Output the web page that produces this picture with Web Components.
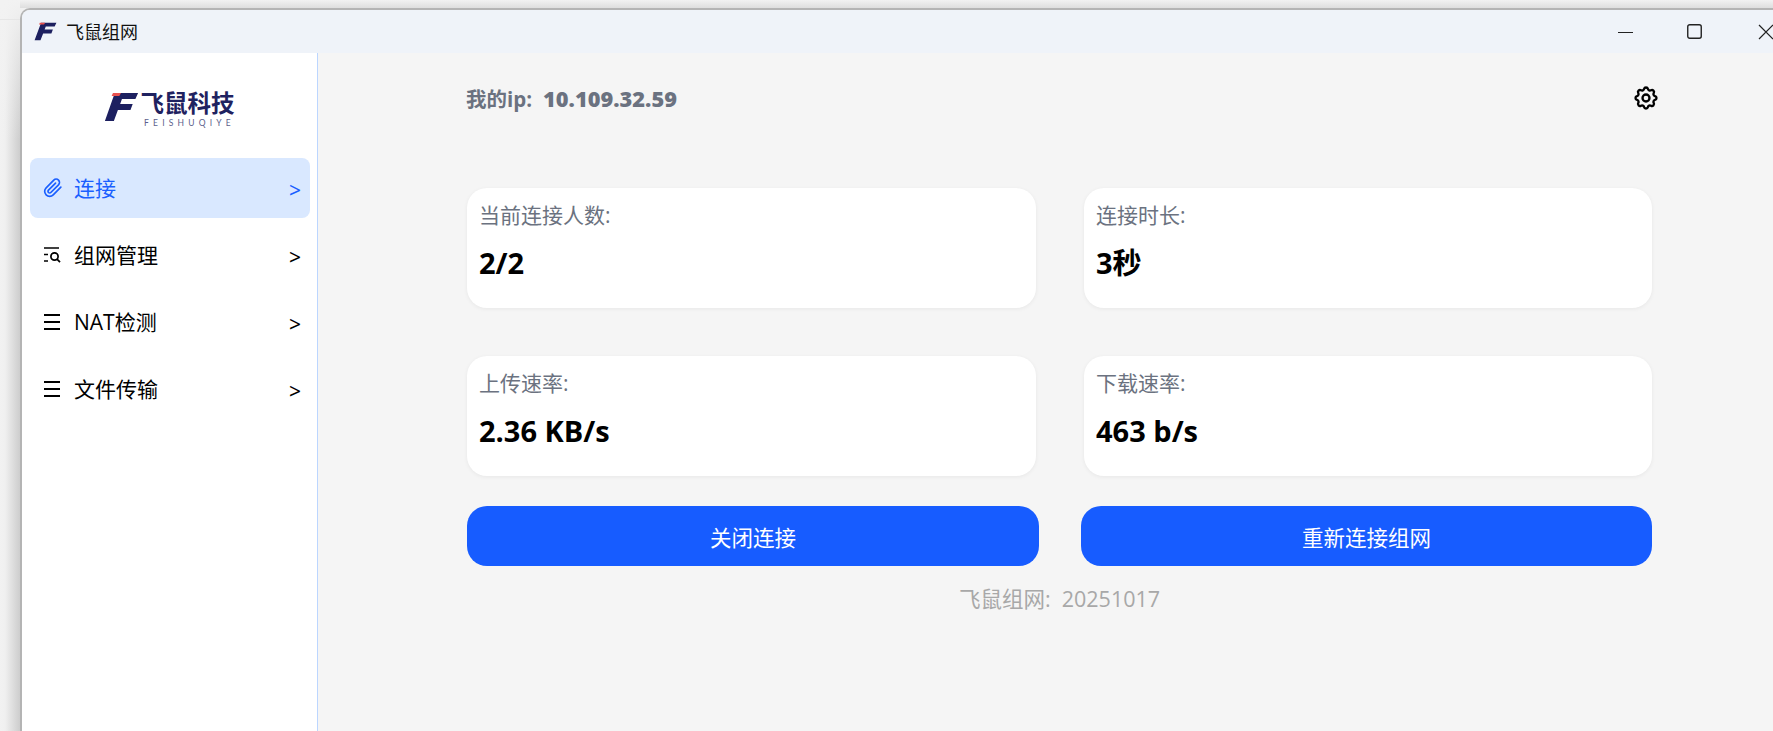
<!DOCTYPE html>
<html lang="zh-CN"><head><meta charset="utf-8"><title>飞鼠组网</title>
<style>
html,body{margin:0;padding:0;height:731px;overflow:hidden;background:#f0f0f0}
body{font-family:"Open Sans","Noto Sans CJK SC",sans-serif}
</style></head><body>
<fs-desktop>
 <fs-window>
  <fs-titlebar slot="top">飞鼠组网</fs-titlebar>
  <fs-sidebar slot="side">
   <fs-logo></fs-logo>
   <fs-menu-item active label="连接"><svg slot="icon" width="20" height="20" viewBox="0 0 24 24" fill="none" stroke="currentColor" stroke-width="2" stroke-linecap="round" stroke-linejoin="round"><path d="M21.44 11.05l-9.19 9.19a6 6 0 0 1-8.49-8.49l9.19-9.19a4 4 0 0 1 5.66 5.66l-9.2 9.19a2 2 0 0 1-2.83-2.83l8.49-8.48"/></svg></fs-menu-item>
   <fs-menu-item label="组网管理"><svg slot="icon" width="18" height="18" viewBox="0 0 18 18" fill="none" stroke="currentColor" stroke-width="1.5"><path d="M1 2h15M1 8.500h4M1 15h4"/><circle cx="11.500" cy="10.500" r="3.600" stroke-width="1.700"/><path d="M14 13.200l3 3" stroke-width="1.800"/></svg></fs-menu-item>
   <fs-menu-item label="NAT检测"><svg slot="icon" width="18" height="18" viewBox="0 0 18 18" fill="none" stroke="currentColor" stroke-width="1.800"><path d="M1 2h16M1 9h16M1 16h16"/></svg></fs-menu-item>
   <fs-menu-item label="文件传输"><svg slot="icon" width="18" height="18" viewBox="0 0 18 18" fill="none" stroke="currentColor" stroke-width="1.800"><path d="M1 2h16M1 9h16M1 16h16"/></svg></fs-menu-item>
  </fs-sidebar>
  <fs-main slot="main" ip="10.109.32.59" version="20251017">
   <fs-stat label="当前连接人数:" value="2/2"></fs-stat>
   <fs-stat label="连接时长:" value="3秒"></fs-stat>
   <fs-stat label="上传速率:" value="2.36 KB/s"></fs-stat>
   <fs-stat label="下载速率:" value="463 b/s"></fs-stat>
   <fs-button slot="actions" style="width:572px">关闭连接</fs-button>
   <fs-button slot="actions" style="width:571px">重新连接组网</fs-button>
  </fs-main>
 </fs-window>
</fs-desktop>
<script>
function def(name, html, init){
  customElements.define(name, class extends HTMLElement{
    constructor(){super();this.attachShadow({mode:'open'}).innerHTML=html;}
    connectedCallback(){ if(init) init.call(this,this.shadowRoot); }
  });
}
def('fs-desktop',`<style>
:host{display:block;width:1773px;height:731px;overflow:hidden;box-sizing:border-box;padding:8px 0 0 20px;
background:
 linear-gradient(180deg,#f2f2f2 0,#dedede 8px) 20px 0/100% 8px no-repeat,
 linear-gradient(#e6e6e6,#e6e6e6) 0 19px/20px 1px no-repeat,
 linear-gradient(180deg,#f2f2f2 0,rgba(242,242,242,0) 140px) 0 0/20px 140px no-repeat,
 linear-gradient(90deg,#f2f2f2 0,#f0f0f0 5px,#cdcdcd 20px) 0 0/20px 100% no-repeat,
 #f0f0f0}
</style><slot></slot>`);
def('fs-window',`<style>
:host{display:flex;flex-direction:column;width:1790px;height:760px;box-sizing:border-box;border:solid #b4b4b4;border-width:2px 0 0 2px;border-top-left-radius:10px;overflow:hidden;background:#f5f5f5}
.body{flex:1;display:flex;min-height:0}
</style><slot name="top"></slot><div class="body"><slot name="side"></slot><slot name="main"></slot></div>`);
def('fs-titlebar',`<style>
:host{display:flex;align-items:center;height:43px;background:#eff3f9;color:#111;font-size:18px;padding-left:12px;flex:none}
svg.l{margin-right:9px}
.t{flex:1;position:relative;top:-1px}
.c{display:flex;align-items:center;width:208px;padding-left:16px;box-sizing:border-box;height:100%}
.c svg{flex:none;display:block}
.c svg:nth-child(2){margin:0 56px 0 53px}
</style>
<svg class="l" width="23" height="19" viewBox="-5 -1 39 30" preserveAspectRatio="none"><path d="M7 0H33L30 6H15L13 11H27L24.500 17H10.500L6 28H-4Z" fill="#1d2060"/><path d="M5 0H14L12 3H3.500Z" fill="#e8524f"/></svg>
<span class="t"><slot></slot></span>
<span class="c">
<svg width="16" height="16" viewBox="0 0 16 16"><path d="M0 8.500H15" stroke="#222" stroke-width="1"/></svg>
<svg width="15" height="15" viewBox="0 0 15 15" fill="none"><rect x=".75" y=".75" width="13.500" height="13.500" rx="2" stroke="#222" stroke-width="1.400"/></svg>
<svg width="16" height="16" viewBox="0 0 16 16" fill="none"><path d="M1 1L15 15M15 1L1 15" stroke="#222" stroke-width="1.200"/></svg>
</span>`);
def('fs-logo',`<style>
:host{display:flex;justify-content:center;height:105px;box-sizing:border-box;padding:39px 2px 0 0;color:#1f2260}
svg{margin:0 2px 0 0;flex:none}
.w{display:flex;flex-direction:column;align-items:center;font-family:"Liberation Sans","Noto Sans CJK SC",sans-serif}
.a{font-size:23.500px;font-weight:700;line-height:24px;white-space:nowrap}
.b{font-family:"Lato",sans-serif;font-size:8.500px;line-height:10px;letter-spacing:4.200px;margin-right:-4px;color:#5c5f8c;margin-top:2px;white-space:nowrap}
</style>
<svg width="35" height="30" viewBox="-5 -1 39 30" preserveAspectRatio="none"><path d="M7 0H33L30 6H15L13 11H27L24.500 17H10.500L6 28H-4Z" fill="#1d2060"/><path d="M5 0H14L12 3H3.500Z" fill="#e8524f"/></svg>
<div class="w"><div class="a">飞鼠科技</div><div class="b">FEISHUQIYE</div></div>`);
def('fs-sidebar',`<style>
:host{display:flex;flex-direction:column;gap:7px;width:295px;flex:none;box-sizing:border-box;background:#fff;padding:0 7px 0 8px}
::slotted(fs-logo){margin-bottom:-7px}
</style><slot></slot>`);
def('fs-menu-item',`<style>
:host{display:flex;align-items:center;height:60px;border-radius:8px;padding:0 9px 0 14px;color:#000;font-size:21px}
:host([active]){background:#d9e8ff;color:#1a5fff}
.i{width:22px;display:flex;align-items:center;flex:none;margin-right:9px;margin-left:-1px}
.l{flex:1;white-space:nowrap;margin-bottom:2px}
.g{font-family:"Noto Sans",sans-serif;font-size:21px;line-height:24px;position:relative;top:2px}
</style><span class="i"><slot name="icon"></slot></span><span class="l"></span><span class="g">&gt;</span>`,
function(r){r.querySelector('.l').textContent=this.getAttribute('label');});
def('fs-main',`<style>
:host{flex:1;display:block;min-width:0;box-sizing:border-box;background:#f5f5f5;border-left:1px solid #bcd6ff;padding:0 0 0 149px;width:1473px}
.w{width:1185px}
.top{display:flex;align-items:center;justify-content:space-between;height:87px;font-weight:700;font-size:20.500px;color:#6b7280;margin:1px -8px 0 -1px}
.top b{font-size:21.800px;margin-left:11px}
.top svg{color:#000;display:block}
.grid{display:grid;grid-template-columns:569px 568px;column-gap:48px;row-gap:48px;margin-top:47px}
.act{display:flex;justify-content:space-between;margin-top:30px}
.ver{text-align:center;color:#a8a8a8;font-size:21.500px;margin-top:19px;line-height:28px}
</style><div class="w">
<div class="top"><span><span class="ip"></span><b class="n"></b></span><svg width="28" height="28" viewBox="0 0 24 24" fill="none" stroke="currentColor" stroke-width="2" stroke-linecap="round" stroke-linejoin="round"><path d="M10.325 4.317c.426 -1.756 2.924 -1.756 3.350 0a1.724 1.724 0 0 0 2.573 1.066c1.543 -.94 3.310 .826 2.370 2.370a1.724 1.724 0 0 0 1.065 2.572c1.756 .426 1.756 2.924 0 3.350a1.724 1.724 0 0 0 -1.066 2.573c.94 1.543 -.826 3.310 -2.370 2.370a1.724 1.724 0 0 0 -2.572 1.065c-.426 1.756 -2.924 1.756 -3.350 0a1.724 1.724 0 0 0 -2.573 -1.066c-1.543 .94 -3.310 -.826 -2.370 -2.370a1.724 1.724 0 0 0 -1.065 -2.572c-1.756 -.426 -1.756 -2.924 0 -3.350a1.724 1.724 0 0 0 1.066 -2.573c-.94 -1.543 .826 -3.310 2.370 -2.370c1 .608 2.296 .07 2.572 -1.065z"/><circle cx="12" cy="12" r="3"/></svg></div>
<div class="grid"><slot></slot></div>
<div class="act"><slot name="actions"></slot></div>
<div class="ver"></div></div>`,
function(r){r.querySelector('.ip').textContent='我的ip:';r.querySelector('.n').textContent=this.getAttribute('ip');r.querySelector('.ver').textContent='飞鼠组网:\u00a0 '+this.getAttribute('version');});
def('fs-stat',`<style>
:host{display:block;height:120px;box-sizing:border-box;background:#fff;border-radius:20px;padding:13px 12px;box-shadow:0 1px 4px rgba(0,0,0,.06)}
.l{font-size:21px;color:#6b7280;line-height:28px}
.v{font-size:29px;font-weight:700;color:#000;line-height:38px;margin-top:15px;white-space:nowrap}
</style><div class="l"></div><div class="v"></div>`,
function(r){r.querySelector('.l').textContent=this.getAttribute('label');r.querySelector('.v').textContent=this.getAttribute('value');});
def('fs-button',`<style>
:host{display:flex;align-items:center;justify-content:center;height:60px;border-radius:20px;background:#175cff;color:#fff;font-size:21.500px;box-sizing:border-box}
</style><slot></slot>`);
</script>
</body></html>
